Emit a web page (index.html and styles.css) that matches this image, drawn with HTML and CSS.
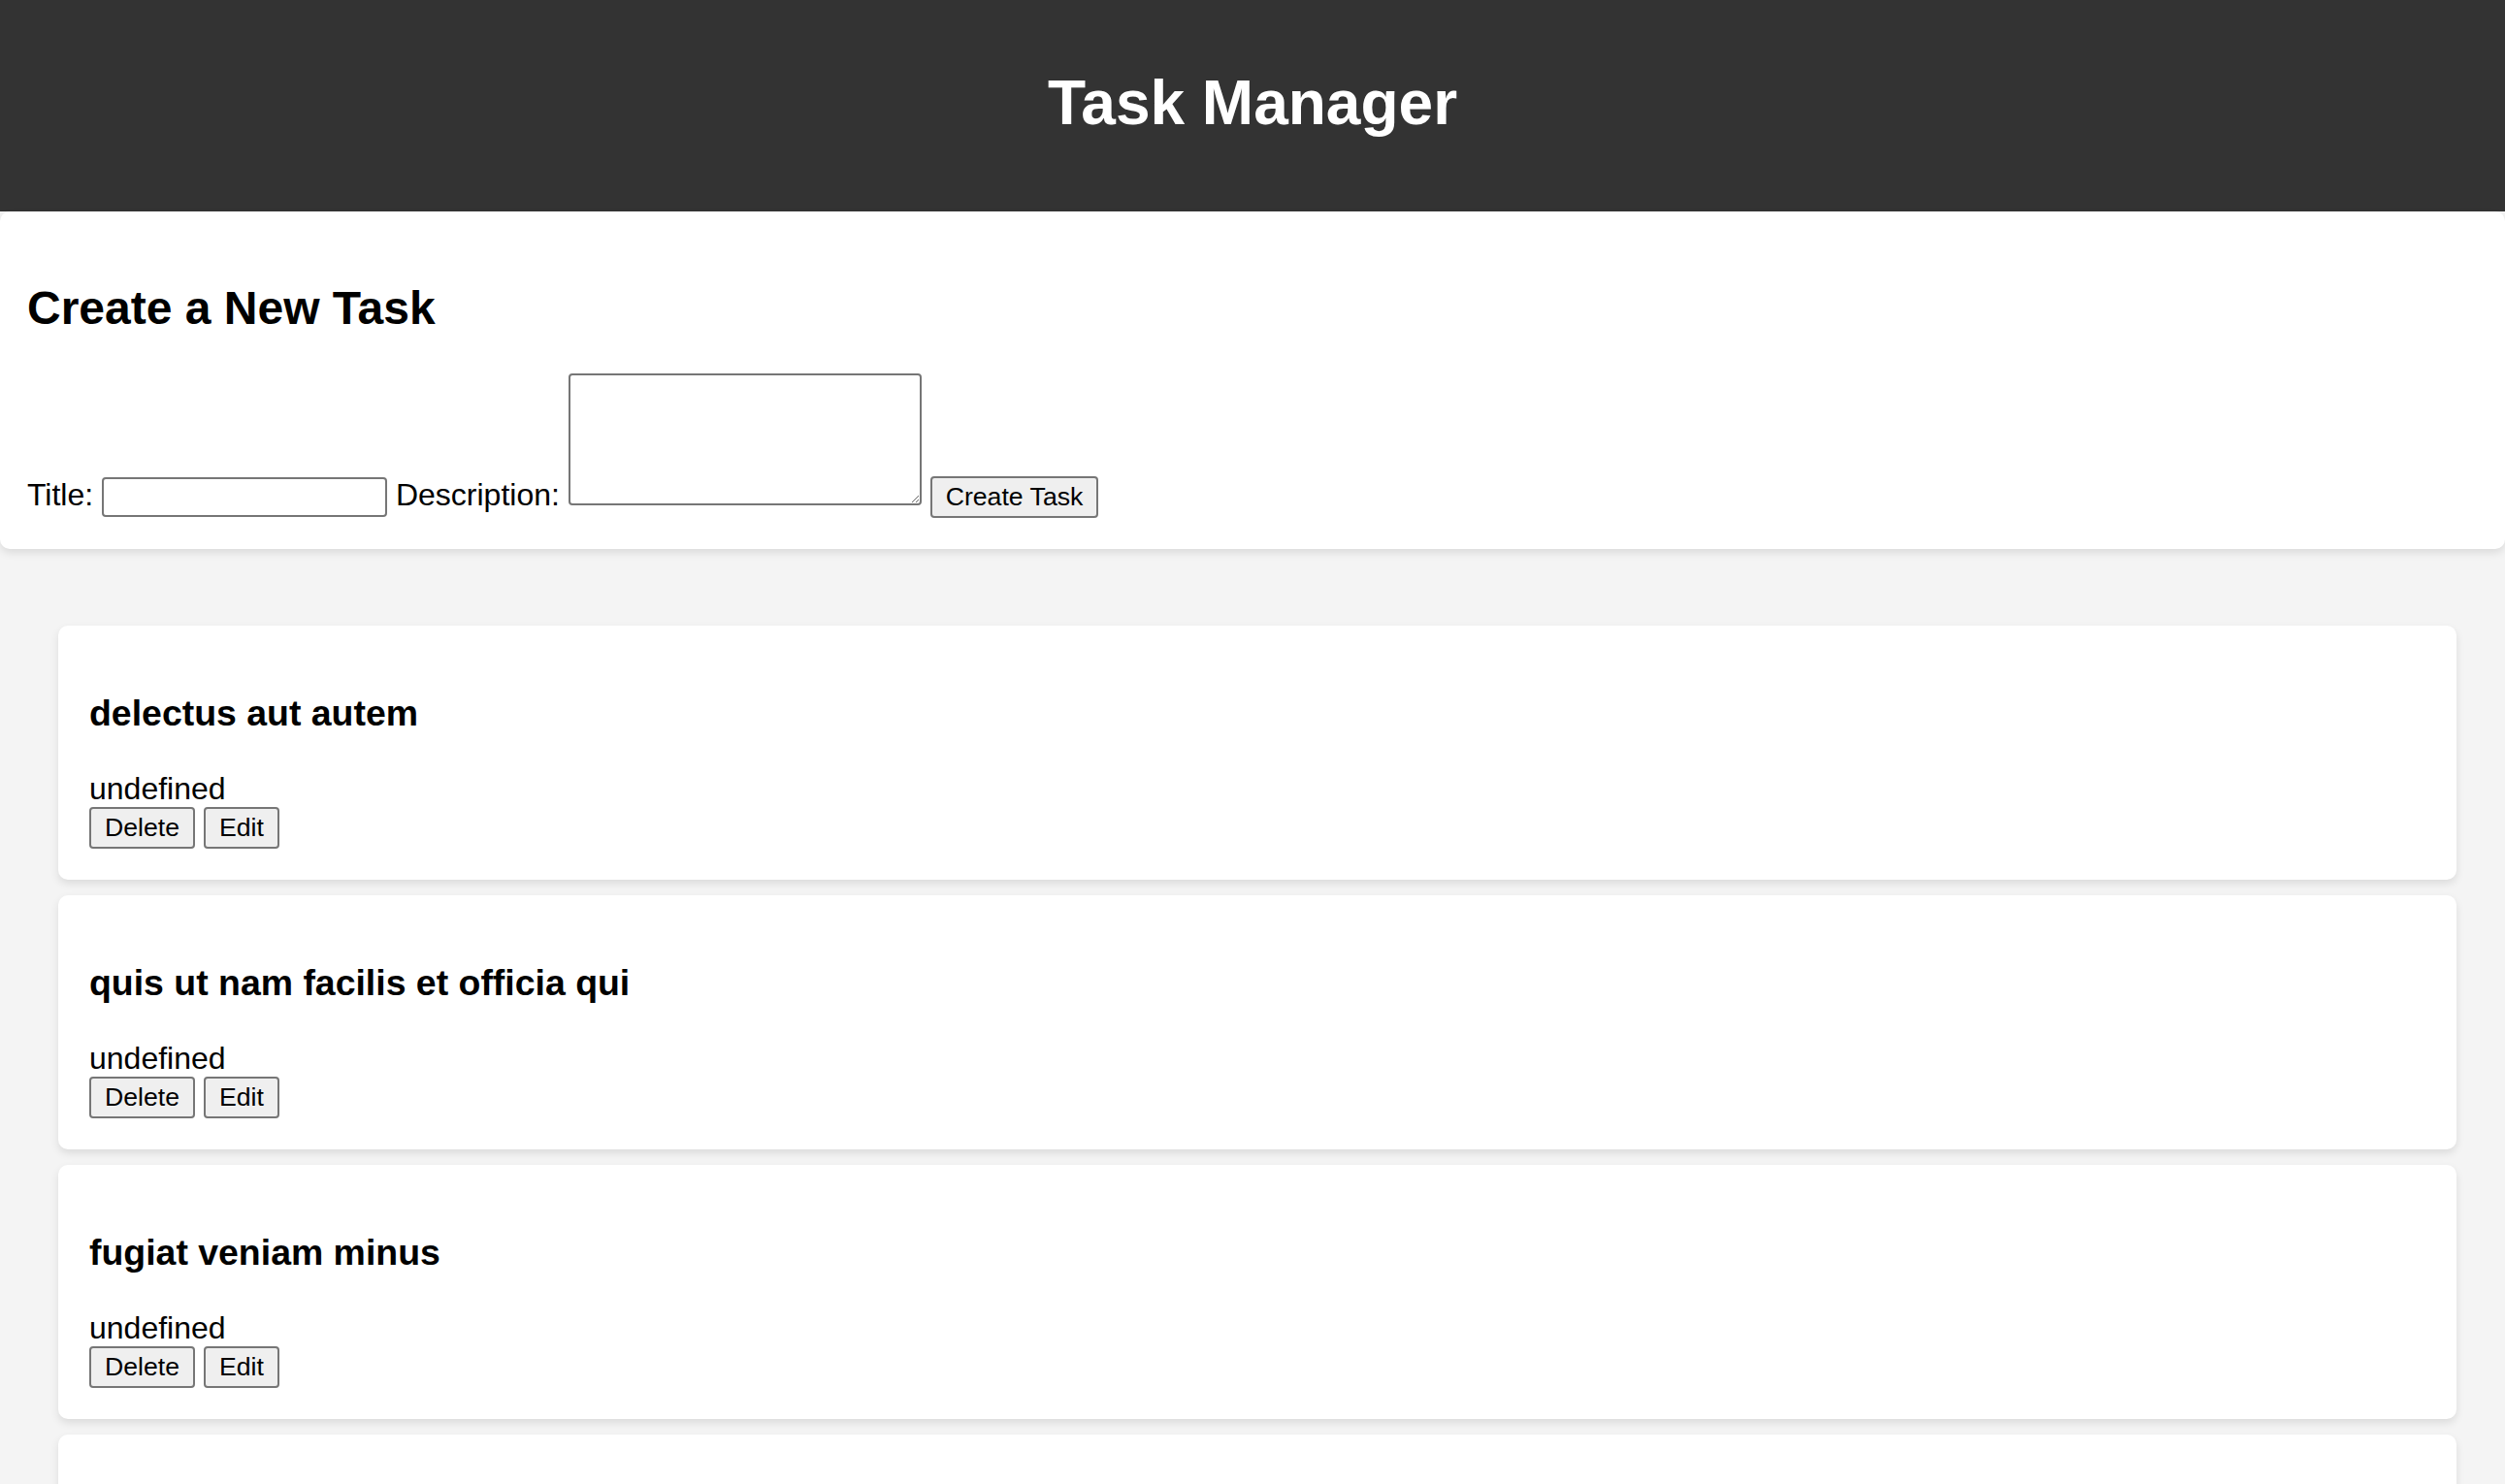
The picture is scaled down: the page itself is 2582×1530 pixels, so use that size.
FILE: index.html
```html
<!DOCTYPE html>
<html lang="en">
<head>
<meta charset="utf-8">
<title>Task Manager</title>
<link rel="stylesheet" href="styles.css">
</head>
<body>
<header class="app-header">
  <h1 class="app-title">Task Manager</h1>
</header>
<section class="create-panel">
  <h2 class="panel-title">Create a New Task</h2>
  <form class="task-form">
    <label class="field-label" for="title">Title:</label> <input class="text-input" id="title" type="text"> <label class="field-label" for="desc">Description:</label> <textarea class="text-area" id="desc"></textarea> <button class="btn" type="button">Create Task</button>
  </form>
</section>
<main class="task-list">
  <div class="task-card">
    <h3 class="task-title">delectus aut autem</h3>
    <p class="task-desc">undefined</p>
    <div class="task-actions"><button class="btn" type="button">Delete</button> <button class="btn" type="button">Edit</button></div>
  </div>
  <div class="task-card">
    <h3 class="task-title">quis ut nam facilis et officia qui</h3>
    <p class="task-desc">undefined</p>
    <div class="task-actions"><button class="btn" type="button">Delete</button> <button class="btn" type="button">Edit</button></div>
  </div>
  <div class="task-card">
    <h3 class="task-title">fugiat veniam minus</h3>
    <p class="task-desc">undefined</p>
    <div class="task-actions"><button class="btn" type="button">Delete</button> <button class="btn" type="button">Edit</button></div>
  </div>
  <div class="task-card">
    <h3 class="task-title">et porro tempora</h3>
    <p class="task-desc">undefined</p>
    <div class="task-actions"><button class="btn" type="button">Delete</button> <button class="btn" type="button">Edit</button></div>
  </div>
</main>
</body>
</html>
```
FILE: styles.css
```css
html, body {
  margin: 0;
}

body {
  background: #f4f4f4;
  color: #000;
  font-family: "Liberation Sans", Arial, Helvetica, sans-serif;
  font-size: 32px;
}

.app-header {
  background: #333333;
  color: #ffffff;
  text-align: center;
  padding: 26px 0 32px;
}

.app-title {
  font-size: 64px;
  font-weight: bold;
  margin: 43px 0;
}

.create-panel {
  background: #ffffff;
  padding: 32px 28px;
  border-radius: 10px;
  box-shadow: 0 4px 8px rgba(0, 0, 0, 0.1);
}

.panel-title {
  font-size: 48px;
  font-weight: bold;
  margin: 0 0 40px;
  padding-top: 40px;
}

.task-form {
  margin: 0;
}

.field-label {
  font-size: 32px;
}

.text-input {
  box-sizing: border-box;
  width: 294px;
  height: 41px;
  margin: 0;
  padding: 0 6px;
  border: 2px solid #767676;
  border-radius: 4px;
  background: #fff;
  font-family: "Liberation Sans", Arial, sans-serif;
  font-size: 26.67px;
  vertical-align: baseline;
}

.text-area {
  box-sizing: border-box;
  width: 364px;
  height: 136px;
  margin: 0;
  padding: 4px;
  border: 2px solid #767676;
  border-radius: 4px;
  background: #fff;
  font-family: "Liberation Mono", monospace;
  font-size: 26.67px;
  vertical-align: baseline;
}

.btn {
  box-sizing: border-box;
  margin: 0;
  padding: 4px 14px;
  border: 2px solid #767676;
  border-radius: 4px;
  background: #efefef;
  color: #000;
  font-family: "Liberation Sans", Arial, sans-serif;
  font-size: 26.67px;
  line-height: normal;
  vertical-align: baseline;
}

.task-list {
  padding: 79px 50px 0 60px;
}

.task-card {
  background: #ffffff;
  border-radius: 10px;
  box-shadow: 0 4px 8px rgba(0, 0, 0, 0.1);
  padding: 32px;
  margin-bottom: 16px;
}

.task-title {
  font-size: 37.44px;
  font-weight: bold;
  margin: 37.44px 0;
}

.task-desc {
  margin: 0;
}
```
